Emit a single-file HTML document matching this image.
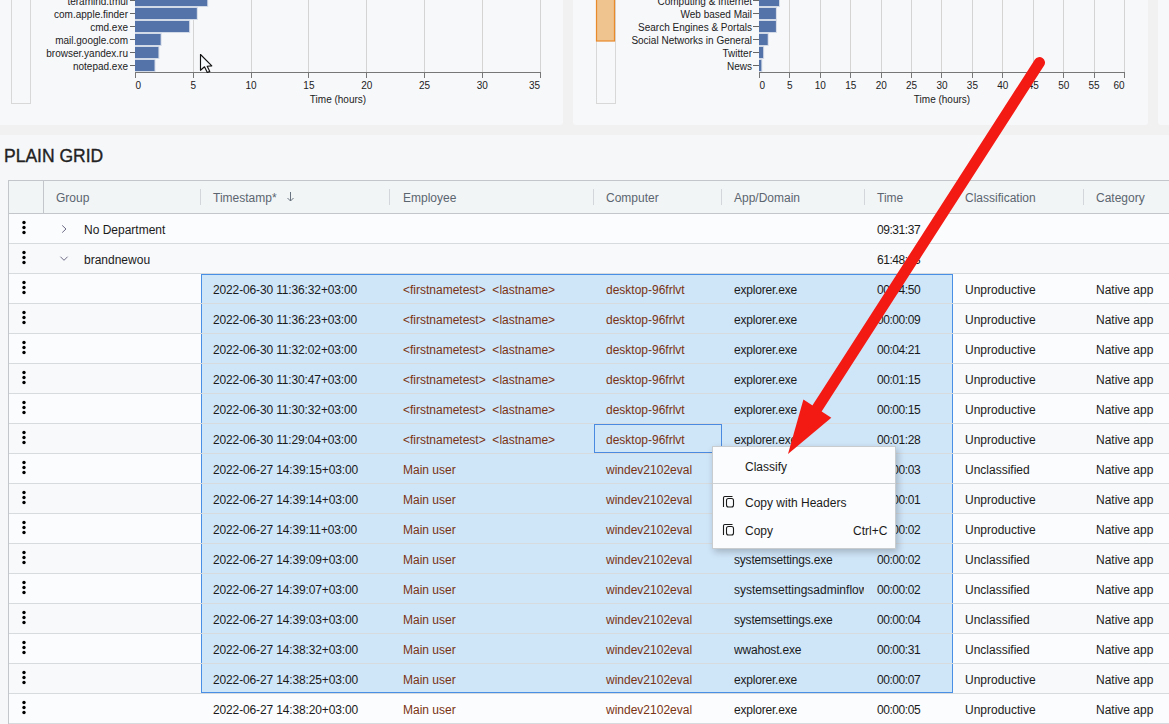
<!DOCTYPE html>
<html><head><meta charset="utf-8"><style>
html,body{margin:0;padding:0}
body{width:1169px;height:724px;overflow:hidden;position:relative;background:#f6f7f9;font-family:"Liberation Sans", sans-serif;}
.t{position:absolute;font-size:12px;line-height:14px;white-space:nowrap;color:#1a1a1a}
.h{color:#5b6570}
.b{color:#7a3312}
</style></head><body>
<svg width="1169" height="135" style="position:absolute;left:0;top:0"><rect x="0" y="0" width="1169" height="135" fill="#f1f1f1"/><rect x="-4" y="-4" width="567" height="129" rx="3" fill="#f7f8fa"/><rect x="573" y="-4" width="575" height="129" rx="3" fill="#f7f8fa"/><rect x="1158" y="-4" width="20" height="129" rx="3" fill="#f7f8fa"/><rect x="11.5" y="-5" width="19" height="108.5" fill="#f7f8fa" stroke="#d8d8d8" stroke-width="1"/><rect x="596.5" y="-5" width="19" height="108.5" fill="#f7f8fa" stroke="#d8d8d8" stroke-width="1"/><rect x="596.5" y="-5" width="18" height="46" fill="#f0c48e" stroke="#e8892a" stroke-width="1.2"/><line x1="193.5" y1="-5" x2="193.5" y2="72" stroke="#d4d4d4" stroke-width="1"/><line x1="251.5" y1="-5" x2="251.5" y2="72" stroke="#d4d4d4" stroke-width="1"/><line x1="308.5" y1="-5" x2="308.5" y2="72" stroke="#d4d4d4" stroke-width="1"/><line x1="366.5" y1="-5" x2="366.5" y2="72" stroke="#d4d4d4" stroke-width="1"/><line x1="424.5" y1="-5" x2="424.5" y2="72" stroke="#d4d4d4" stroke-width="1"/><line x1="482.5" y1="-5" x2="482.5" y2="72" stroke="#d4d4d4" stroke-width="1"/><line x1="540.5" y1="-5" x2="540.5" y2="72" stroke="#d4d4d4" stroke-width="1"/><rect x="135" y="-6.0" width="73.2" height="13" fill="#d3dae7"/><rect x="135" y="-5.0" width="72.2" height="11" fill="#5473a8"/><line x1="130" y1="0.5" x2="135" y2="0.5" stroke="#666" stroke-width="1"/><text x="128" y="4.8" text-anchor="end" font-family='"Liberation Sans", sans-serif' font-size="10" fill="#222">teramind.tmui</text><rect x="135" y="7.0" width="62.8" height="13" fill="#d3dae7"/><rect x="135" y="8.0" width="61.8" height="11" fill="#5473a8"/><line x1="130" y1="13.5" x2="135" y2="13.5" stroke="#666" stroke-width="1"/><text x="128" y="17.8" text-anchor="end" font-family='"Liberation Sans", sans-serif' font-size="10" fill="#222">com.apple.finder</text><rect x="135" y="20.0" width="55.1" height="13" fill="#d3dae7"/><rect x="135" y="21.0" width="54.1" height="11" fill="#5473a8"/><line x1="130" y1="26.5" x2="135" y2="26.5" stroke="#666" stroke-width="1"/><text x="128" y="30.8" text-anchor="end" font-family='"Liberation Sans", sans-serif' font-size="10" fill="#222">cmd.exe</text><rect x="135" y="33.0" width="26.6" height="13" fill="#d3dae7"/><rect x="135" y="34.0" width="25.6" height="11" fill="#5473a8"/><line x1="130" y1="39.5" x2="135" y2="39.5" stroke="#666" stroke-width="1"/><text x="128" y="43.8" text-anchor="end" font-family='"Liberation Sans", sans-serif' font-size="10" fill="#222">mail.google.com</text><rect x="135" y="46.0" width="24.4" height="13" fill="#d3dae7"/><rect x="135" y="47.0" width="23.4" height="11" fill="#5473a8"/><line x1="130" y1="52.5" x2="135" y2="52.5" stroke="#666" stroke-width="1"/><text x="128" y="56.8" text-anchor="end" font-family='"Liberation Sans", sans-serif' font-size="10" fill="#222">browser.yandex.ru</text><rect x="135" y="59.0" width="20.5" height="13" fill="#d3dae7"/><rect x="135" y="60.0" width="19.5" height="11" fill="#5473a8"/><line x1="130" y1="65.5" x2="135" y2="65.5" stroke="#666" stroke-width="1"/><text x="128" y="69.8" text-anchor="end" font-family='"Liberation Sans", sans-serif' font-size="10" fill="#222">notepad.exe</text><line x1="135.0" y1="72.5" x2="541" y2="72.5" stroke="#777" stroke-width="1"/><line x1="135.5" y1="72" x2="135.5" y2="78" stroke="#777" stroke-width="1"/><text x="135.5" y="88.6" text-anchor="start" font-family='"Liberation Sans", sans-serif' font-size="10" fill="#222">0</text><line x1="193.5" y1="72" x2="193.5" y2="78" stroke="#777" stroke-width="1"/><text x="193.3" y="88.6" text-anchor="middle" font-family='"Liberation Sans", sans-serif' font-size="10" fill="#222">5</text><line x1="251.5" y1="72" x2="251.5" y2="78" stroke="#777" stroke-width="1"/><text x="251.1" y="88.6" text-anchor="middle" font-family='"Liberation Sans", sans-serif' font-size="10" fill="#222">10</text><line x1="308.5" y1="72" x2="308.5" y2="78" stroke="#777" stroke-width="1"/><text x="308.9" y="88.6" text-anchor="middle" font-family='"Liberation Sans", sans-serif' font-size="10" fill="#222">15</text><line x1="366.5" y1="72" x2="366.5" y2="78" stroke="#777" stroke-width="1"/><text x="366.7" y="88.6" text-anchor="middle" font-family='"Liberation Sans", sans-serif' font-size="10" fill="#222">20</text><line x1="424.5" y1="72" x2="424.5" y2="78" stroke="#777" stroke-width="1"/><text x="424.5" y="88.6" text-anchor="middle" font-family='"Liberation Sans", sans-serif' font-size="10" fill="#222">25</text><line x1="482.5" y1="72" x2="482.5" y2="78" stroke="#777" stroke-width="1"/><text x="482.3" y="88.6" text-anchor="middle" font-family='"Liberation Sans", sans-serif' font-size="10" fill="#222">30</text><line x1="540.5" y1="72" x2="540.5" y2="78" stroke="#777" stroke-width="1"/><text x="540.1" y="88.6" text-anchor="end" font-family='"Liberation Sans", sans-serif' font-size="10" fill="#222">35</text><text x="338" y="102.6" text-anchor="middle" font-family='"Liberation Sans", sans-serif' font-size="10" fill="#222">Time (hours)</text><line x1="789.5" y1="-5" x2="789.5" y2="72" stroke="#d4d4d4" stroke-width="1"/><line x1="820.5" y1="-5" x2="820.5" y2="72" stroke="#d4d4d4" stroke-width="1"/><line x1="850.5" y1="-5" x2="850.5" y2="72" stroke="#d4d4d4" stroke-width="1"/><line x1="881.5" y1="-5" x2="881.5" y2="72" stroke="#d4d4d4" stroke-width="1"/><line x1="911.5" y1="-5" x2="911.5" y2="72" stroke="#d4d4d4" stroke-width="1"/><line x1="941.5" y1="-5" x2="941.5" y2="72" stroke="#d4d4d4" stroke-width="1"/><line x1="972.5" y1="-5" x2="972.5" y2="72" stroke="#d4d4d4" stroke-width="1"/><line x1="1002.5" y1="-5" x2="1002.5" y2="72" stroke="#d4d4d4" stroke-width="1"/><line x1="1033.5" y1="-5" x2="1033.5" y2="72" stroke="#d4d4d4" stroke-width="1"/><line x1="1063.5" y1="-5" x2="1063.5" y2="72" stroke="#d4d4d4" stroke-width="1"/><line x1="1094.5" y1="-5" x2="1094.5" y2="72" stroke="#d4d4d4" stroke-width="1"/><line x1="1124.5" y1="-5" x2="1124.5" y2="72" stroke="#d4d4d4" stroke-width="1"/><rect x="759" y="-6.0" width="21.0" height="13" fill="#d3dae7"/><rect x="759" y="-5.0" width="20.0" height="11" fill="#5473a8"/><line x1="753" y1="0.5" x2="759" y2="0.5" stroke="#666" stroke-width="1"/><text x="752" y="4.8" text-anchor="end" font-family='"Liberation Sans", sans-serif' font-size="10" fill="#222">Computing &amp; Internet</text><rect x="759" y="7.0" width="17.9" height="13" fill="#d3dae7"/><rect x="759" y="8.0" width="16.9" height="11" fill="#5473a8"/><line x1="753" y1="13.5" x2="759" y2="13.5" stroke="#666" stroke-width="1"/><text x="752" y="17.8" text-anchor="end" font-family='"Liberation Sans", sans-serif' font-size="10" fill="#222">Web based Mail</text><rect x="759" y="20.0" width="17.9" height="13" fill="#d3dae7"/><rect x="759" y="21.0" width="16.9" height="11" fill="#5473a8"/><line x1="753" y1="26.5" x2="759" y2="26.5" stroke="#666" stroke-width="1"/><text x="752" y="30.8" text-anchor="end" font-family='"Liberation Sans", sans-serif' font-size="10" fill="#222">Search Engines &amp; Portals</text><rect x="759" y="33.0" width="9.7" height="13" fill="#d3dae7"/><rect x="759" y="34.0" width="8.7" height="11" fill="#5473a8"/><line x1="753" y1="39.5" x2="759" y2="39.5" stroke="#666" stroke-width="1"/><text x="752" y="43.8" text-anchor="end" font-family='"Liberation Sans", sans-serif' font-size="10" fill="#222">Social Networks in General</text><rect x="759" y="46.0" width="5.1" height="13" fill="#d3dae7"/><rect x="759" y="47.0" width="4.1" height="11" fill="#5473a8"/><line x1="753" y1="52.5" x2="759" y2="52.5" stroke="#666" stroke-width="1"/><text x="752" y="56.8" text-anchor="end" font-family='"Liberation Sans", sans-serif' font-size="10" fill="#222">Twitter</text><rect x="759" y="59.0" width="3.3" height="13" fill="#d3dae7"/><rect x="759" y="60.0" width="2.3" height="11" fill="#5473a8"/><line x1="753" y1="65.5" x2="759" y2="65.5" stroke="#666" stroke-width="1"/><text x="752" y="69.8" text-anchor="end" font-family='"Liberation Sans", sans-serif' font-size="10" fill="#222">News</text><line x1="759.0" y1="72.5" x2="1125" y2="72.5" stroke="#777" stroke-width="1"/><line x1="759.5" y1="72" x2="759.5" y2="78" stroke="#777" stroke-width="1"/><text x="759.5" y="88.6" text-anchor="start" font-family='"Liberation Sans", sans-serif' font-size="10" fill="#222">0</text><line x1="789.5" y1="72" x2="789.5" y2="78" stroke="#777" stroke-width="1"/><text x="789.9" y="88.6" text-anchor="middle" font-family='"Liberation Sans", sans-serif' font-size="10" fill="#222">5</text><line x1="820.5" y1="72" x2="820.5" y2="78" stroke="#777" stroke-width="1"/><text x="820.3" y="88.6" text-anchor="middle" font-family='"Liberation Sans", sans-serif' font-size="10" fill="#222">10</text><line x1="850.5" y1="72" x2="850.5" y2="78" stroke="#777" stroke-width="1"/><text x="850.7" y="88.6" text-anchor="middle" font-family='"Liberation Sans", sans-serif' font-size="10" fill="#222">15</text><line x1="881.5" y1="72" x2="881.5" y2="78" stroke="#777" stroke-width="1"/><text x="881.2" y="88.6" text-anchor="middle" font-family='"Liberation Sans", sans-serif' font-size="10" fill="#222">20</text><line x1="911.5" y1="72" x2="911.5" y2="78" stroke="#777" stroke-width="1"/><text x="911.6" y="88.6" text-anchor="middle" font-family='"Liberation Sans", sans-serif' font-size="10" fill="#222">25</text><line x1="941.5" y1="72" x2="941.5" y2="78" stroke="#777" stroke-width="1"/><text x="942.0" y="88.6" text-anchor="middle" font-family='"Liberation Sans", sans-serif' font-size="10" fill="#222">30</text><line x1="972.5" y1="72" x2="972.5" y2="78" stroke="#777" stroke-width="1"/><text x="972.4" y="88.6" text-anchor="middle" font-family='"Liberation Sans", sans-serif' font-size="10" fill="#222">35</text><line x1="1002.5" y1="72" x2="1002.5" y2="78" stroke="#777" stroke-width="1"/><text x="1002.8" y="88.6" text-anchor="middle" font-family='"Liberation Sans", sans-serif' font-size="10" fill="#222">40</text><line x1="1033.5" y1="72" x2="1033.5" y2="78" stroke="#777" stroke-width="1"/><text x="1033.2" y="88.6" text-anchor="middle" font-family='"Liberation Sans", sans-serif' font-size="10" fill="#222">45</text><line x1="1063.5" y1="72" x2="1063.5" y2="78" stroke="#777" stroke-width="1"/><text x="1063.7" y="88.6" text-anchor="middle" font-family='"Liberation Sans", sans-serif' font-size="10" fill="#222">50</text><line x1="1094.5" y1="72" x2="1094.5" y2="78" stroke="#777" stroke-width="1"/><text x="1094.1" y="88.6" text-anchor="middle" font-family='"Liberation Sans", sans-serif' font-size="10" fill="#222">55</text><line x1="1124.5" y1="72" x2="1124.5" y2="78" stroke="#777" stroke-width="1"/><text x="1124.5" y="88.6" text-anchor="end" font-family='"Liberation Sans", sans-serif' font-size="10" fill="#222">60</text><text x="942" y="102.6" text-anchor="middle" font-family='"Liberation Sans", sans-serif' font-size="10" fill="#222">Time (hours)</text><path d="M200.5 54.5 L200.5 70.3 L204.5 66.8 L207.3 72.5 L209.8 71.4 L207.2 66.2 L211.8 65.9 Z" fill="#f8fbfe" stroke="#111" stroke-width="1.15" stroke-linejoin="round"/></svg>
<div style="position:absolute;left:4px;top:144px;font-size:17.5px;line-height:24px;color:#222;-webkit-text-stroke:0.35px #222">PLAIN GRID</div>
<div style="position:absolute;left:8px;top:180px;width:1171px;height:554px;border-left:1px solid #c3c7cb;border-top:1px solid #c3c7cb;background:#fafcfd"></div>
<div style="position:absolute;left:9px;top:181px;width:1161px;height:32px;background:#f2f5f6;border-bottom:1px solid #c3c7cb"></div>
<div style="position:absolute;left:43px;top:181px;width:1px;height:32px;background:#c3c7cb"></div>
<div style="position:absolute;left:200px;top:189px;width:1px;height:16px;background:#d3d7db"></div>
<div style="position:absolute;left:389px;top:189px;width:1px;height:16px;background:#d3d7db"></div>
<div style="position:absolute;left:593px;top:189px;width:1px;height:16px;background:#d3d7db"></div>
<div style="position:absolute;left:721px;top:189px;width:1px;height:16px;background:#d3d7db"></div>
<div style="position:absolute;left:864px;top:189px;width:1px;height:16px;background:#d3d7db"></div>
<div style="position:absolute;left:952px;top:189px;width:1px;height:16px;background:#d3d7db"></div>
<div style="position:absolute;left:1083px;top:189px;width:1px;height:16px;background:#d3d7db"></div>
<div class="t h" style="left:56px;top:191px">Group</div>
<div class="t h" style="left:213px;top:191px">Timestamp*</div>
<div class="t h" style="left:403px;top:191px">Employee</div>
<div class="t h" style="left:606px;top:191px">Computer</div>
<div class="t h" style="left:734px;top:191px">App/Domain</div>
<div class="t h" style="left:877px;top:191px">Time</div>
<div class="t h" style="left:965px;top:191px">Classification</div>
<div class="t h" style="left:1096px;top:191px">Category</div>
<svg style="position:absolute;left:286px;top:191px" width="10" height="12"><path d="M4.5 1 V10 M1.5 7 L4.5 10 L7.5 7" fill="none" stroke="#6a7480" stroke-width="1"/></svg>
<div style="position:absolute;left:9px;top:244px;width:1160px;height:29px;background:#f7f9fb"></div>
<div style="position:absolute;left:9px;top:304px;width:1160px;height:29px;background:#f7f9fb"></div>
<div style="position:absolute;left:9px;top:364px;width:1160px;height:29px;background:#f7f9fb"></div>
<div style="position:absolute;left:9px;top:424px;width:1160px;height:29px;background:#f7f9fb"></div>
<div style="position:absolute;left:9px;top:484px;width:1160px;height:29px;background:#f7f9fb"></div>
<div style="position:absolute;left:9px;top:544px;width:1160px;height:29px;background:#f7f9fb"></div>
<div style="position:absolute;left:9px;top:604px;width:1160px;height:29px;background:#f7f9fb"></div>
<div style="position:absolute;left:9px;top:664px;width:1160px;height:29px;background:#f7f9fb"></div>
<div style="position:absolute;left:9px;top:243px;width:1160px;height:1px;background:#d8dbde"></div>
<svg style="position:absolute;left:22px;top:220px" width="5" height="17"><circle cx="2" cy="2.5" r="1.7" fill="#000"/><circle cx="2" cy="7.5" r="1.7" fill="#000"/><circle cx="2" cy="12.5" r="1.7" fill="#000"/></svg>
<svg style="position:absolute;left:56px;top:214px" width="16" height="29"><path d="M6.2 11.4 L10 15 L6.2 18.6" fill="none" stroke="#6e6a85" stroke-width="1"/></svg>
<div class="t" style="left:84px;top:223px">No Department</div>
<div class="t" style="left:877px;top:223px;letter-spacing:-0.45px">09:31:37</div>
<div style="position:absolute;left:9px;top:273px;width:1160px;height:1px;background:#d8dbde"></div>
<svg style="position:absolute;left:22px;top:250px" width="5" height="17"><circle cx="2" cy="2.5" r="1.7" fill="#000"/><circle cx="2" cy="7.5" r="1.7" fill="#000"/><circle cx="2" cy="12.5" r="1.7" fill="#000"/></svg>
<svg style="position:absolute;left:56px;top:244px" width="16" height="29"><path d="M4.4 12.7 L8 16.3 L11.6 12.7" fill="none" stroke="#6e6a85" stroke-width="1"/></svg>
<div class="t" style="left:84px;top:253px">brandnewou</div>
<div class="t" style="left:877px;top:253px;letter-spacing:-0.45px">61:48:13</div>
<div style="position:absolute;left:201px;top:274px;width:751px;height:419px;background:#cfe5f8"></div>
<div style="position:absolute;left:201px;top:274px;width:750px;height:417px;border:1px solid #4a8fe6"></div>
<div style="position:absolute;left:9px;top:303px;width:1160px;height:1px;background:#d8dbde"></div>
<svg style="position:absolute;left:22px;top:280px" width="5" height="17"><circle cx="2" cy="2.5" r="1.7" fill="#000"/><circle cx="2" cy="7.5" r="1.7" fill="#000"/><circle cx="2" cy="12.5" r="1.7" fill="#000"/></svg>
<div class="t" style="left:213px;top:283px;letter-spacing:-0.14px">2022-06-30 11:36:32+03:00</div>
<div class="t b" style="left:403px;top:283px">&lt;firstnametest&gt;&nbsp; &lt;lastname&gt;</div>
<div class="t b" style="left:606px;top:283px">desktop-96frlvt</div>
<div class="t" style="left:734px;top:283px;width:130px;overflow:hidden;letter-spacing:-0.2px">explorer.exe</div>
<div class="t" style="left:877px;top:283px;letter-spacing:-0.45px">00:04:50</div>
<div class="t" style="left:965px;top:283px">Unproductive</div>
<div class="t" style="left:1096px;top:283px">Native app</div>
<div style="position:absolute;left:9px;top:333px;width:1160px;height:1px;background:#d8dbde"></div>
<svg style="position:absolute;left:22px;top:310px" width="5" height="17"><circle cx="2" cy="2.5" r="1.7" fill="#000"/><circle cx="2" cy="7.5" r="1.7" fill="#000"/><circle cx="2" cy="12.5" r="1.7" fill="#000"/></svg>
<div class="t" style="left:213px;top:313px;letter-spacing:-0.14px">2022-06-30 11:36:23+03:00</div>
<div class="t b" style="left:403px;top:313px">&lt;firstnametest&gt;&nbsp; &lt;lastname&gt;</div>
<div class="t b" style="left:606px;top:313px">desktop-96frlvt</div>
<div class="t" style="left:734px;top:313px;width:130px;overflow:hidden;letter-spacing:-0.2px">explorer.exe</div>
<div class="t" style="left:877px;top:313px;letter-spacing:-0.45px">00:00:09</div>
<div class="t" style="left:965px;top:313px">Unproductive</div>
<div class="t" style="left:1096px;top:313px">Native app</div>
<div style="position:absolute;left:9px;top:363px;width:1160px;height:1px;background:#d8dbde"></div>
<svg style="position:absolute;left:22px;top:340px" width="5" height="17"><circle cx="2" cy="2.5" r="1.7" fill="#000"/><circle cx="2" cy="7.5" r="1.7" fill="#000"/><circle cx="2" cy="12.5" r="1.7" fill="#000"/></svg>
<div class="t" style="left:213px;top:343px;letter-spacing:-0.14px">2022-06-30 11:32:02+03:00</div>
<div class="t b" style="left:403px;top:343px">&lt;firstnametest&gt;&nbsp; &lt;lastname&gt;</div>
<div class="t b" style="left:606px;top:343px">desktop-96frlvt</div>
<div class="t" style="left:734px;top:343px;width:130px;overflow:hidden;letter-spacing:-0.2px">explorer.exe</div>
<div class="t" style="left:877px;top:343px;letter-spacing:-0.45px">00:04:21</div>
<div class="t" style="left:965px;top:343px">Unproductive</div>
<div class="t" style="left:1096px;top:343px">Native app</div>
<div style="position:absolute;left:9px;top:393px;width:1160px;height:1px;background:#d8dbde"></div>
<svg style="position:absolute;left:22px;top:370px" width="5" height="17"><circle cx="2" cy="2.5" r="1.7" fill="#000"/><circle cx="2" cy="7.5" r="1.7" fill="#000"/><circle cx="2" cy="12.5" r="1.7" fill="#000"/></svg>
<div class="t" style="left:213px;top:373px;letter-spacing:-0.14px">2022-06-30 11:30:47+03:00</div>
<div class="t b" style="left:403px;top:373px">&lt;firstnametest&gt;&nbsp; &lt;lastname&gt;</div>
<div class="t b" style="left:606px;top:373px">desktop-96frlvt</div>
<div class="t" style="left:734px;top:373px;width:130px;overflow:hidden;letter-spacing:-0.2px">explorer.exe</div>
<div class="t" style="left:877px;top:373px;letter-spacing:-0.45px">00:01:15</div>
<div class="t" style="left:965px;top:373px">Unproductive</div>
<div class="t" style="left:1096px;top:373px">Native app</div>
<div style="position:absolute;left:9px;top:423px;width:1160px;height:1px;background:#d8dbde"></div>
<svg style="position:absolute;left:22px;top:400px" width="5" height="17"><circle cx="2" cy="2.5" r="1.7" fill="#000"/><circle cx="2" cy="7.5" r="1.7" fill="#000"/><circle cx="2" cy="12.5" r="1.7" fill="#000"/></svg>
<div class="t" style="left:213px;top:403px;letter-spacing:-0.14px">2022-06-30 11:30:32+03:00</div>
<div class="t b" style="left:403px;top:403px">&lt;firstnametest&gt;&nbsp; &lt;lastname&gt;</div>
<div class="t b" style="left:606px;top:403px">desktop-96frlvt</div>
<div class="t" style="left:734px;top:403px;width:130px;overflow:hidden;letter-spacing:-0.2px">explorer.exe</div>
<div class="t" style="left:877px;top:403px;letter-spacing:-0.45px">00:00:15</div>
<div class="t" style="left:965px;top:403px">Unproductive</div>
<div class="t" style="left:1096px;top:403px">Native app</div>
<div style="position:absolute;left:9px;top:453px;width:1160px;height:1px;background:#d8dbde"></div>
<svg style="position:absolute;left:22px;top:430px" width="5" height="17"><circle cx="2" cy="2.5" r="1.7" fill="#000"/><circle cx="2" cy="7.5" r="1.7" fill="#000"/><circle cx="2" cy="12.5" r="1.7" fill="#000"/></svg>
<div class="t" style="left:213px;top:433px;letter-spacing:-0.14px">2022-06-30 11:29:04+03:00</div>
<div class="t b" style="left:403px;top:433px">&lt;firstnametest&gt;&nbsp; &lt;lastname&gt;</div>
<div class="t b" style="left:606px;top:433px">desktop-96frlvt</div>
<div class="t" style="left:734px;top:433px;width:130px;overflow:hidden;letter-spacing:-0.2px">explorer.exe</div>
<div class="t" style="left:877px;top:433px;letter-spacing:-0.45px">00:01:28</div>
<div class="t" style="left:965px;top:433px">Unproductive</div>
<div class="t" style="left:1096px;top:433px">Native app</div>
<div style="position:absolute;left:9px;top:483px;width:1160px;height:1px;background:#d8dbde"></div>
<svg style="position:absolute;left:22px;top:460px" width="5" height="17"><circle cx="2" cy="2.5" r="1.7" fill="#000"/><circle cx="2" cy="7.5" r="1.7" fill="#000"/><circle cx="2" cy="12.5" r="1.7" fill="#000"/></svg>
<div class="t" style="left:213px;top:463px;letter-spacing:-0.14px">2022-06-27 14:39:15+03:00</div>
<div class="t b" style="left:403px;top:463px">Main user</div>
<div class="t b" style="left:606px;top:463px">windev2102eval</div>
<div class="t" style="left:734px;top:463px;width:130px;overflow:hidden;letter-spacing:-0.2px">explorer.exe</div>
<div class="t" style="left:877px;top:463px;letter-spacing:-0.45px">00:00:03</div>
<div class="t" style="left:965px;top:463px">Unclassified</div>
<div class="t" style="left:1096px;top:463px">Native app</div>
<div style="position:absolute;left:9px;top:513px;width:1160px;height:1px;background:#d8dbde"></div>
<svg style="position:absolute;left:22px;top:490px" width="5" height="17"><circle cx="2" cy="2.5" r="1.7" fill="#000"/><circle cx="2" cy="7.5" r="1.7" fill="#000"/><circle cx="2" cy="12.5" r="1.7" fill="#000"/></svg>
<div class="t" style="left:213px;top:493px;letter-spacing:-0.14px">2022-06-27 14:39:14+03:00</div>
<div class="t b" style="left:403px;top:493px">Main user</div>
<div class="t b" style="left:606px;top:493px">windev2102eval</div>
<div class="t" style="left:734px;top:493px;width:130px;overflow:hidden;letter-spacing:-0.2px">explorer.exe</div>
<div class="t" style="left:877px;top:493px;letter-spacing:-0.45px">00:00:01</div>
<div class="t" style="left:965px;top:493px">Unproductive</div>
<div class="t" style="left:1096px;top:493px">Native app</div>
<div style="position:absolute;left:9px;top:543px;width:1160px;height:1px;background:#d8dbde"></div>
<svg style="position:absolute;left:22px;top:520px" width="5" height="17"><circle cx="2" cy="2.5" r="1.7" fill="#000"/><circle cx="2" cy="7.5" r="1.7" fill="#000"/><circle cx="2" cy="12.5" r="1.7" fill="#000"/></svg>
<div class="t" style="left:213px;top:523px;letter-spacing:-0.14px">2022-06-27 14:39:11+03:00</div>
<div class="t b" style="left:403px;top:523px">Main user</div>
<div class="t b" style="left:606px;top:523px">windev2102eval</div>
<div class="t" style="left:734px;top:523px;width:130px;overflow:hidden;letter-spacing:-0.2px">explorer.exe</div>
<div class="t" style="left:877px;top:523px;letter-spacing:-0.45px">00:00:02</div>
<div class="t" style="left:965px;top:523px">Unproductive</div>
<div class="t" style="left:1096px;top:523px">Native app</div>
<div style="position:absolute;left:9px;top:573px;width:1160px;height:1px;background:#d8dbde"></div>
<svg style="position:absolute;left:22px;top:550px" width="5" height="17"><circle cx="2" cy="2.5" r="1.7" fill="#000"/><circle cx="2" cy="7.5" r="1.7" fill="#000"/><circle cx="2" cy="12.5" r="1.7" fill="#000"/></svg>
<div class="t" style="left:213px;top:553px;letter-spacing:-0.14px">2022-06-27 14:39:09+03:00</div>
<div class="t b" style="left:403px;top:553px">Main user</div>
<div class="t b" style="left:606px;top:553px">windev2102eval</div>
<div class="t" style="left:734px;top:553px;width:130px;overflow:hidden;letter-spacing:-0.2px">systemsettings.exe</div>
<div class="t" style="left:877px;top:553px;letter-spacing:-0.45px">00:00:02</div>
<div class="t" style="left:965px;top:553px">Unclassified</div>
<div class="t" style="left:1096px;top:553px">Native app</div>
<div style="position:absolute;left:9px;top:603px;width:1160px;height:1px;background:#d8dbde"></div>
<svg style="position:absolute;left:22px;top:580px" width="5" height="17"><circle cx="2" cy="2.5" r="1.7" fill="#000"/><circle cx="2" cy="7.5" r="1.7" fill="#000"/><circle cx="2" cy="12.5" r="1.7" fill="#000"/></svg>
<div class="t" style="left:213px;top:583px;letter-spacing:-0.14px">2022-06-27 14:39:07+03:00</div>
<div class="t b" style="left:403px;top:583px">Main user</div>
<div class="t b" style="left:606px;top:583px">windev2102eval</div>
<div class="t" style="left:734px;top:583px;width:130px;overflow:hidden;letter-spacing:0">systemsettingsadminflows.exe</div>
<div class="t" style="left:877px;top:583px;letter-spacing:-0.45px">00:00:02</div>
<div class="t" style="left:965px;top:583px">Unclassified</div>
<div class="t" style="left:1096px;top:583px">Native app</div>
<div style="position:absolute;left:9px;top:633px;width:1160px;height:1px;background:#d8dbde"></div>
<svg style="position:absolute;left:22px;top:610px" width="5" height="17"><circle cx="2" cy="2.5" r="1.7" fill="#000"/><circle cx="2" cy="7.5" r="1.7" fill="#000"/><circle cx="2" cy="12.5" r="1.7" fill="#000"/></svg>
<div class="t" style="left:213px;top:613px;letter-spacing:-0.14px">2022-06-27 14:39:03+03:00</div>
<div class="t b" style="left:403px;top:613px">Main user</div>
<div class="t b" style="left:606px;top:613px">windev2102eval</div>
<div class="t" style="left:734px;top:613px;width:130px;overflow:hidden;letter-spacing:-0.2px">systemsettings.exe</div>
<div class="t" style="left:877px;top:613px;letter-spacing:-0.45px">00:00:04</div>
<div class="t" style="left:965px;top:613px">Unclassified</div>
<div class="t" style="left:1096px;top:613px">Native app</div>
<div style="position:absolute;left:9px;top:663px;width:1160px;height:1px;background:#d8dbde"></div>
<svg style="position:absolute;left:22px;top:640px" width="5" height="17"><circle cx="2" cy="2.5" r="1.7" fill="#000"/><circle cx="2" cy="7.5" r="1.7" fill="#000"/><circle cx="2" cy="12.5" r="1.7" fill="#000"/></svg>
<div class="t" style="left:213px;top:643px;letter-spacing:-0.14px">2022-06-27 14:38:32+03:00</div>
<div class="t b" style="left:403px;top:643px">Main user</div>
<div class="t b" style="left:606px;top:643px">windev2102eval</div>
<div class="t" style="left:734px;top:643px;width:130px;overflow:hidden;letter-spacing:-0.2px">wwahost.exe</div>
<div class="t" style="left:877px;top:643px;letter-spacing:-0.45px">00:00:31</div>
<div class="t" style="left:965px;top:643px">Unclassified</div>
<div class="t" style="left:1096px;top:643px">Native app</div>
<div style="position:absolute;left:9px;top:693px;width:1160px;height:1px;background:#d8dbde"></div>
<svg style="position:absolute;left:22px;top:670px" width="5" height="17"><circle cx="2" cy="2.5" r="1.7" fill="#000"/><circle cx="2" cy="7.5" r="1.7" fill="#000"/><circle cx="2" cy="12.5" r="1.7" fill="#000"/></svg>
<div class="t" style="left:213px;top:673px;letter-spacing:-0.14px">2022-06-27 14:38:25+03:00</div>
<div class="t b" style="left:403px;top:673px">Main user</div>
<div class="t b" style="left:606px;top:673px">windev2102eval</div>
<div class="t" style="left:734px;top:673px;width:130px;overflow:hidden;letter-spacing:-0.2px">explorer.exe</div>
<div class="t" style="left:877px;top:673px;letter-spacing:-0.45px">00:00:07</div>
<div class="t" style="left:965px;top:673px">Unproductive</div>
<div class="t" style="left:1096px;top:673px">Native app</div>
<div style="position:absolute;left:9px;top:723px;width:1160px;height:1px;background:#d8dbde"></div>
<svg style="position:absolute;left:22px;top:700px" width="5" height="17"><circle cx="2" cy="2.5" r="1.7" fill="#000"/><circle cx="2" cy="7.5" r="1.7" fill="#000"/><circle cx="2" cy="12.5" r="1.7" fill="#000"/></svg>
<div class="t" style="left:213px;top:703px;letter-spacing:-0.14px">2022-06-27 14:38:20+03:00</div>
<div class="t b" style="left:403px;top:703px">Main user</div>
<div class="t b" style="left:606px;top:703px">windev2102eval</div>
<div class="t" style="left:734px;top:703px;width:130px;overflow:hidden;letter-spacing:-0.2px">explorer.exe</div>
<div class="t" style="left:877px;top:703px;letter-spacing:-0.45px">00:00:05</div>
<div class="t" style="left:965px;top:703px">Unproductive</div>
<div class="t" style="left:1096px;top:703px">Native app</div>
<div style="position:absolute;left:594px;top:424px;width:126px;height:27px;border:1px solid #4a8ae0"></div>
<div style="position:absolute;left:712px;top:446px;width:182px;height:101px;background:#fafcfd;border:1px solid #c9cccf;box-shadow:2px 3px 7px rgba(0,0,0,0.22)"></div>
<div style="position:absolute;left:713px;top:483px;width:182px;height:1px;background:#cfd2d5"></div>
<div class="t" style="left:745px;top:460px">Classify</div>
<div class="t" style="left:745px;top:496px">Copy with Headers</div>
<div class="t" style="left:745px;top:524px">Copy</div>
<div class="t" style="left:853px;top:524px">Ctrl+C</div>
<svg style="position:absolute;left:722px;top:495px" width="14" height="14"><path d="M1.5 12 V2.8 Q1.5 1.5 2.8 1.5 H10.5" fill="none" stroke="#1a1a1a" stroke-width="1.1"/><rect x="4.5" y="3.5" width="7" height="8.5" rx="2" fill="none" stroke="#1a1a1a" stroke-width="1.1"/></svg>
<svg style="position:absolute;left:722px;top:523px" width="14" height="14"><path d="M1.5 12 V2.8 Q1.5 1.5 2.8 1.5 H10.5" fill="none" stroke="#1a1a1a" stroke-width="1.1"/><rect x="4.5" y="3.5" width="7" height="8.5" rx="2" fill="none" stroke="#1a1a1a" stroke-width="1.1"/></svg>
<svg style="position:absolute;left:0;top:0" width="1169" height="724"><line x1="1039.5" y1="62.6" x2="817" y2="408.5" stroke="#f41a14" stroke-width="11" stroke-linecap="round"/><path d="M788 454 L803.4 399.4 L831.3 417.7 Z" fill="#f41a14"/></svg>
</body></html>
